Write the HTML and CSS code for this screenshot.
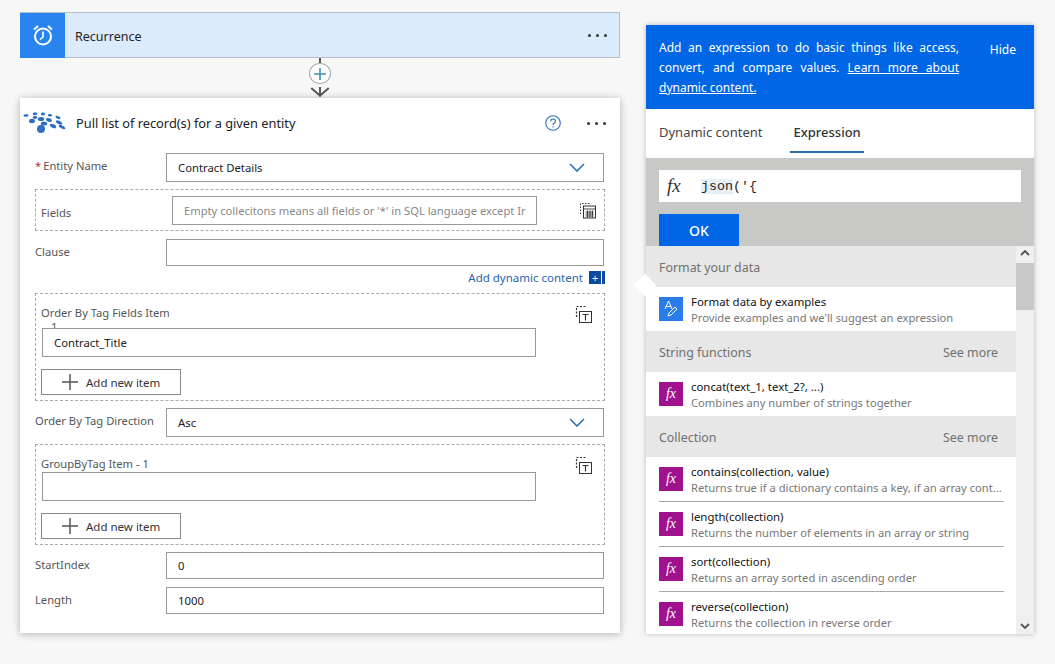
FILE: index.html
```html
<!DOCTYPE html>
<html lang="en">
<head>
  <meta charset="UTF-8" />
  <title>Pull list of records</title>
  <link rel="stylesheet" href="styles.css">
</head>
<body>
  <div class="flow">
    <div class="trigger">
      <div class="trigger-icon">
        <svg width="24" height="24" viewBox="0 0 24 24" fill="none" stroke="#fff">
          <circle cx="12" cy="13.5" r="8" stroke-width="2"/>
          <path d="M12 8.500v5.500l-3 2.500" stroke-width="1.600"/>
          <path d="M3 6.500 7 3M21 6.500 17 3" stroke-width="2"/>
        </svg>
      </div>
      <span class="trigger-name">Recurrence</span>
      <span class="dots"><i></i><i></i><i></i></span>
    </div>

    <div class="connector">
      <span class="line"></span>
      <span class="add-step">
        <svg width="14" height="14" viewBox="0 0 14 14" stroke="#3f8fb5" stroke-width="1.600"><path d="M7 1v12M1 7h12"/></svg>
      </span>
      <svg class="arrow" width="20" height="11" viewBox="0 0 20 11" fill="none" stroke="#555" stroke-width="2"><path d="M1 1l9 8 9-8M10 0v10"/></svg>
    </div>

    <div class="card">
      <div class="card-head">
        <svg class="logo" width="44" height="24" viewBox="0 0 44 24" fill="#2f6fc0">
          <ellipse cx="3" cy="4.500" rx="2.600" ry="1.300"/>
          <ellipse cx="12" cy="2.800" rx="2.200" ry="1.500"/>
          <ellipse cx="20" cy="3" rx="2.200" ry="1.400"/>
          <ellipse cx="27" cy="4.200" rx="2.200" ry="1.300"/>
          <ellipse cx="35" cy="6.500" rx="2.600" ry="1.400" transform="rotate(20 35 6.500)"/>
          <ellipse cx="9" cy="10" rx="3" ry="2.200"/>
          <ellipse cx="12" cy="6.500" rx="2.200" ry="1.400"/>
          <ellipse cx="18" cy="8" rx="3.200" ry="2"/>
          <ellipse cx="26" cy="9" rx="3" ry="1.800" transform="rotate(20 26 9)"/>
          <ellipse cx="36" cy="11.500" rx="3.400" ry="1.600" transform="rotate(25 36 11.500)"/>
          <ellipse cx="21" cy="12.500" rx="3.200" ry="2"/>
          <ellipse cx="30" cy="15" rx="3.400" ry="1.800" transform="rotate(25 30 15)"/>
          <ellipse cx="39" cy="16" rx="3.600" ry="1.500" transform="rotate(30 39 16)"/>
          <circle cx="18" cy="18" r="4"/>
        </svg>
        <span class="card-title">Pull list of record(s) for a given entity</span>
        <svg class="help" width="18" height="18" viewBox="0 0 18 18" fill="none" stroke="#2f6fb7" stroke-width="1.100">
          <circle cx="9" cy="9" r="7.300"/>
          <path d="M6.800 7.200c0-3 4.600-3 4.600 0 0 1.900-2.300 1.800-2.300 3.700M9.100 12.300v1.300"/>
        </svg>
        <span class="dots"><i></i><i></i><i></i></span>
      </div>

      <div class="card-body">
        <div class="row">
          <label class="row-label"><b class="req">*</b>Entity Name</label>
          <div class="box select">Contract Details
            <svg width="16" height="9" viewBox="0 0 16 9" fill="none" stroke="#2f6fb7" stroke-width="1.600"><path d="M1 1l7 7 7-7"/></svg>
          </div>
        </div>

        <div class="dashed dashed-row">
          <label class="fields-label">Fields</label>
          <div class="box fields-input">Empty collecitons means all fields or '*' in SQL language except Ir</div>
          <svg class="table-icon" width="18" height="18" viewBox="0 0 18 18" fill="none" stroke="#333">
            <path d="M1.500 13V2.500h10" stroke-dasharray="1.500 1.500"/>
            <rect x="4.500" y="5" width="12" height="12" fill="#fff"/>
            <path d="M4.500 8h12M6.500 11h8M6.500 13h8M6.500 15h8M8.500 9.500v7M11 9.500v7M13.500 9.500v7" stroke-width=".9"/>
          </svg>
        </div>

        <div class="row row-clause">
          <label class="row-label">Clause</label>
          <div class="box"></div>
        </div>
        <div class="dynamic">
          <a>Add dynamic content</a>
          <span class="dynamic-btn">+</span>
        </div>

        <div class="dashed array array-tall">
          <div class="array-head">
            <label class="array-label">Order By Tag Fields Item<span class="array-index">1</span></label>
            <svg class="table-icon" width="18" height="18" viewBox="0 0 18 18" fill="none" stroke="#333">
              <path d="M1.500 12V1.500h10" stroke-dasharray="2 1.500" stroke-width="1.200"/>
              <rect x="4.500" y="6.500" width="12" height="11" fill="#fff"/>
              <path d="M7.500 9.500h6M10.500 9.500v6" stroke-width="1.200"/>
            </svg>
          </div>
          <div class="box array-input">Contract_Title</div>
          <button class="add-item">
            <svg width="16" height="16" viewBox="0 0 16 16" stroke="#555" stroke-width="1.500"><path d="M8 0v16M0 8h16"/></svg>
            Add new item
          </button>
        </div>

        <div class="row row-after">
          <label class="row-label">Order By Tag Direction</label>
          <div class="box select">Asc
            <svg width="16" height="9" viewBox="0 0 16 9" fill="none" stroke="#2f6fb7" stroke-width="1.600"><path d="M1 1l7 7 7-7"/></svg>
          </div>
        </div>

        <div class="dashed array array-short">
          <div class="array-head">
            <label class="array-label">GroupByTag Item - 1</label>
            <svg class="table-icon" width="18" height="18" viewBox="0 0 18 18" fill="none" stroke="#333">
              <path d="M1.500 12V1.500h10" stroke-dasharray="2 1.500" stroke-width="1.200"/>
              <rect x="4.500" y="6.500" width="12" height="11" fill="#fff"/>
              <path d="M7.500 9.500h6M10.500 9.500v6" stroke-width="1.200"/>
            </svg>
          </div>
          <div class="box array-input"></div>
          <button class="add-item">
            <svg width="16" height="16" viewBox="0 0 16 16" stroke="#555" stroke-width="1.500"><path d="M8 0v16M0 8h16"/></svg>
            Add new item
          </button>
        </div>

        <div class="row row-low row-after">
          <label class="row-label">StartIndex</label>
          <div class="box">0</div>
        </div>
        <div class="row row-low row-next">
          <label class="row-label">Length</label>
          <div class="box">1000</div>
        </div>
      </div>
    </div>
  </div>

  <div class="panel">
    <span class="beak"></span>
    <div class="panel-info">
      <p>Add an expression to do basic things like access, convert, and compare values. <a>Learn more about dynamic content.</a></p>
      <span class="hide">Hide</span>
    </div>
    <div class="tabs">
      <span class="tab">Dynamic content</span>
      <span class="tab tab-on">Expression</span>
    </div>
    <div class="editor">
      <div class="editor-input">
        <span class="fx-big">fx</span>
        <code><mark>json</mark>('{</code>
      </div>
      <button class="ok">OK</button>
    </div>
    <div class="list-wrap">
      <div class="list">
        <div class="group">Format your data</div>
        <div class="item">
          <span class="item-icon blue">
            <svg width="24" height="24" viewBox="0 0 24 24" fill="none" stroke="#fff" stroke-width="1"><path d="M6 12l3.500-8 3.500 8M7.200 9.500h4.600"/><path d="M9 19l1-3 6-6 2 2-6 6z"/></svg>
          </span>
          <div><div class="item-name">Format data by examples</div><div class="item-desc">Provide examples and we'll suggest an expression</div></div>
        </div>
        <div class="group">String functions<span class="more">See more</span></div>
        <div class="item">
          <span class="item-icon">fx</span>
          <div><div class="item-name">concat(text_1, text_2?, ...)</div><div class="item-desc">Combines any number of strings together</div></div>
        </div>
        <div class="group">Collection<span class="more">See more</span></div>
        <div class="item item-line">
          <span class="item-icon">fx</span>
          <div><div class="item-name">contains(collection, value)</div><div class="item-desc">Returns true if a dictionary contains a key, if an array cont...</div></div>
        </div>
        <div class="item item-line">
          <span class="item-icon">fx</span>
          <div><div class="item-name">length(collection)</div><div class="item-desc">Returns the number of elements in an array or string</div></div>
        </div>
        <div class="item item-line">
          <span class="item-icon">fx</span>
          <div><div class="item-name">sort(collection)</div><div class="item-desc">Returns an array sorted in ascending order</div></div>
        </div>
        <div class="item">
          <span class="item-icon">fx</span>
          <div><div class="item-name">reverse(collection)</div><div class="item-desc">Returns the collection in reverse order</div></div>
        </div>
      </div>
      <div class="scroll">
        <svg width="10" height="6" viewBox="0 0 10 6" fill="none" stroke="#555" stroke-width="1.800"><path d="M1 5l4-4 4 4"/></svg>
        <span class="thumb"></span>
        <svg class="scroll-down" width="10" height="6" viewBox="0 0 10 6" fill="none" stroke="#555" stroke-width="1.800"><path d="M1 1l4 4 4-4"/></svg>
      </div>
    </div>
  </div>
</body>
</html>
```

FILE: styles.css
```css
* {
  box-sizing: border-box;
  font-family: "Noto Sans", "Open Sans", sans-serif;
}

body {
  margin: 0;
  height: 664px;
  overflow: hidden;
  background: #f7f7f7;
  display: flex;
  align-items: flex-start;
  gap: 26px;
  padding: 12px 0 0 20px;
  font-size: 12px;
  color: #222;
}

.flow {
  width: 600px;
}

.trigger {
  height: 46px;
  display: flex;
  align-items: center;
  background: #dcebfc;
  border: 1px solid #b4bfca;
  border-left: none;
}

.trigger-icon {
  width: 45px;
  height: 45px;
  background: #2a84f0;
  display: flex;
  align-items: center;
  justify-content: center;
}

.trigger-name {
  margin: 2px 0 0 10px;
  font-size: 12.500px;
  flex: 1;
}

.dots {
  display: flex;
  gap: 5px;
  margin-right: 12px;
}

.dots i {
  width: 3px;
  height: 3px;
  border-radius: 50%;
  background: #333;
}

.connector {
  height: 40px;
  display: flex;
  flex-direction: column;
  align-items: center;
}

.line {
  width: 2px;
  height: 5px;
  background: #555;
}

.add-step {
  width: 22px;
  height: 22px;
  border-radius: 50%;
  border: 1px solid #aaa;
  background: #fff;
  display: flex;
  align-items: center;
  justify-content: center;
}

.arrow {
  margin-top: 3px;
}

.card {
  height: 535px;
  background: #fff;
  box-shadow: 0 1px 8px rgba(0, 0, 0, 0.28);
}

.card-head {
  height: 55px;
  display: flex;
  align-items: center;
  padding: 0 0 5px 3px;
}

.card-head .dots {
  margin-right: 14px;
}

.logo {
  flex: none;
}

.card-title {
  margin-left: 9px;
  font-size: 12.800px;
  flex: 1;
}

.help {
  margin-right: 25px;
}

.card-body {
  padding: 0 15px;
}

.row {
  display: flex;
  padding-right: 1px;
}

.row-label {
  width: 131px;
  flex: none;
  color: #555;
  font-size: 11.200px;
  padding-top: 5px;
}

.req {
  color: #b3392f;
  font-weight: normal;
  margin-right: 2px;
}

.box {
  flex: 1;
  height: 29px;
  border: 1px solid #999;
  background: #fff;
  padding: 0 11px;
  display: flex;
  align-items: center;
  justify-content: space-between;
  font-size: 11.300px;
  position: relative;
}

.select svg {
  margin-right: 7px;
}

.dashed {
  border: 1px dashed #aaa;
  margin-top: 7px;
}

.dashed-row {
  height: 42px;
  display: flex;
  align-items: center;
  padding-left: 5px;
}

.fields-label {
  width: 131px;
  color: #555;
  font-size: 11.200px;
  padding-top: 5px;
}

.fields-input {
  flex: none;
  width: 365px;
  color: #888;
  white-space: nowrap;
  overflow: hidden;
  padding-right: 0;
  font-size: 11.200px;
}

.table-icon {
  margin-left: 42px;
  flex: none;
}

.row-clause {
  margin-top: 8px;
}

.row-clause .box,
.row-low .box {
  height: 27px;
}

.dynamic {
  height: 27px;
  display: flex;
  align-items: center;
  justify-content: flex-end;
  gap: 6px;
  padding-bottom: 5px;
  color: #2a63b0;
  font-size: 11.500px;
}

.dynamic-btn {
  width: 16px;
  height: 13px;
  background: #0b4a9e;
  color: #fff;
  font-size: 11px;
  line-height: 13px;
  padding-left: 3px;
  border-right: 3px solid #0b4a9e;
  box-shadow: inset -1px 0 0 #fff;
}

.dynamic + .dashed {
  margin-top: 0;
}

.array {
  padding: 0 5px;
}

.array-tall {
  height: 108px;
}

.array-short {
  height: 101px;
}

.array-head {
  display: flex;
  justify-content: space-between;
  align-items: flex-start;
  padding-top: 12px;
  height: 34px;
  padding-right: 6px;
}

.array-short .array-head {
  height: 27px;
}

.array-head .table-icon {
  margin-top: -1px;
}

.array-label {
  color: #555;
  font-size: 11.200px;
  line-height: 14px;
}

.array-index {
  display: block;
  padding-left: 10px;
}

.array-input {
  width: 494px;
  margin-left: 1px;
  flex: none;
}

.add-item {
  margin-top: 12px;
  width: 140px;
  height: 26px;
  border: 1px solid #888;
  background: #fff;
  display: flex;
  align-items: center;
  padding: 0 0 0 20px;
  gap: 8px;
  font-size: 11.500px;
  color: #333;
}

.row-after {
  margin-top: 7px;
}

.row-next {
  margin-top: 8px;
}

/* right panel */
.panel {
  width: 388px;
  height: 609px;
  margin-top: 13px;
  background: #fff;
  box-shadow: 0 0 5px rgba(0, 0, 0, 0.25);
  position: relative;
}

.beak {
  position: absolute;
  left: -9px;
  top: 252px;
  width: 16px;
  height: 16px;
  background: #fff;
  transform: rotate(45deg);
}

.panel-info {
  height: 84px;
  background: #0066e6;
  color: #fff;
  padding: 13px 13px 0;
  display: flex;
  justify-content: space-between;
  font-size: 12px;
  position: relative;
}

.panel-info p {
  margin: 0;
  width: 300px;
  line-height: 20px;
  text-align: justify;
}

.panel-info a {
  text-decoration: underline;
}

.hide {
  padding: 3px 5px 0 0;
}

.tabs {
  height: 49px;
  display: flex;
  align-items: flex-start;
  padding-left: 10px;
  gap: 25px;
  font-size: 13px;
  color: #444;
}

.tab {
  padding: 14px 3px 0;
  height: 44px;
}

.tab-on {
  color: #333;
  font-weight: 500;
  border-bottom: 2px solid #2a6fa8;
}

.editor {
  height: 88px;
  background: #c8c9c7;
  padding: 12px 13px 0;
}

.editor-input {
  height: 32px;
  background: #fff;
  display: flex;
  align-items: center;
  padding-left: 8px;
}

.fx-big {
  font-family: "Liberation Serif", serif;
  font-style: italic;
  font-size: 19px;
  width: 34px;
  color: #333;
}

.editor-input code {
  font-family: "Liberation Mono", monospace;
  font-size: 13.300px;
  color: #222;
}

.editor-input mark {
  font-family: "Liberation Mono", monospace;
  background: #e6eef7;
  color: #222;
}

.ok {
  display: block;
  margin-top: 12px;
  width: 80px;
  height: 32px;
  background: #0066e6;
  border: none;
  color: #fff;
  font-size: 14px;
  font-weight: 500;
}

.list-wrap {
  height: 388px;
  display: flex;
  overflow: hidden;
}

.list {
  width: 370px;
  flex: none;
}

.group {
  height: 41px;
  background: #e6e7e6;
  color: #707070;
  display: flex;
  justify-content: space-between;
  align-items: center;
  padding: 2px 18px 0 13px;
  font-size: 12.400px;
}

.item {
  height: 44px;
  margin: 0 12px 0 13px;
  display: flex;
  align-items: flex-start;
  gap: 8px;
  padding-top: 10px;
}

.item-line {
  height: 45px;
  border-bottom: 1px solid #aaa;
}

.item-icon {
  width: 24px;
  height: 24px;
  flex: none;
  background: #a0128d;
  color: #fff;
  font-family: "Liberation Serif", serif;
  font-style: italic;
  font-size: 14px;
  text-align: center;
  line-height: 23px;
}

.blue {
  background: #2a7de8;
}

.item-name {
  font-size: 11.400px;
  line-height: 16px;
  margin-top: -3px;
  color: #111;
}

.item-desc {
  font-size: 11.200px;
  line-height: 16px;
  color: #777;
  white-space: nowrap;
}

.scroll {
  flex: 1;
  background: #f0f0f0;
  display: flex;
  flex-direction: column;
  align-items: center;
  padding-top: 4px;
}

.thumb {
  width: 100%;
  height: 47px;
  margin-top: 7px;
  background: #c8c8c8;
}

.scroll-down {
  margin-top: auto;
  margin-bottom: 5px;
}
```
